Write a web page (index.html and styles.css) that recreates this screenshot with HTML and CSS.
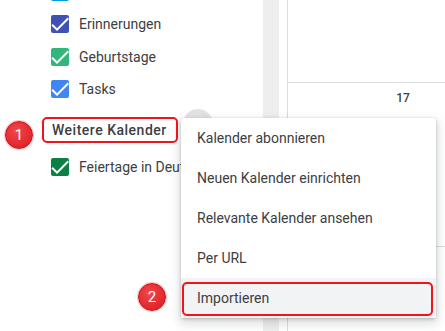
FILE: index.html
```html
<!DOCTYPE html>
<html lang="de">
  <head>
    <meta charset="UTF-8" />
    <meta name="viewport" content="width=device-width, initial-scale=1.0" />
    <title>Kalender</title>
    <link rel="stylesheet" href="styles.css">
  </head>
  <body>
    <div class="app">
      <aside class="sidebar">
        <div class="sidebar-scroll">
          <ul class="cal-list first">
            <li class="cal-row">
              <svg class="check" viewBox="3 3 18 18"><rect x="3" y="3" width="18" height="18" rx="2" fill="#039be5"/><path d="M9 16.17L4.83 12l-1.42 1.41L9 19 21 7l-1.41-1.41z" fill="#fff"/></svg>
              <span>Ryan Weber</span>
            </li>
            <li class="cal-row">
              <svg class="check" viewBox="3 3 18 18"><rect x="3" y="3" width="18" height="18" rx="2" fill="#3f51b5"/><path d="M9 16.17L4.83 12l-1.42 1.41L9 19 21 7l-1.41-1.41z" fill="#fff"/></svg>
              <span>Erinnerungen</span>
            </li>
            <li class="cal-row">
              <svg class="check" viewBox="3 3 18 18"><rect x="3" y="3" width="18" height="18" rx="2" fill="#33b679"/><path d="M9 16.17L4.83 12l-1.42 1.41L9 19 21 7l-1.41-1.41z" fill="#fff"/></svg>
              <span>Geburtstage</span>
            </li>
            <li class="cal-row">
              <svg class="check" viewBox="3 3 18 18"><rect x="3" y="3" width="18" height="18" rx="2" fill="#4285f4"/><path d="M9 16.17L4.83 12l-1.42 1.41L9 19 21 7l-1.41-1.41z" fill="#fff"/></svg>
              <span>Tasks</span>
            </li>
          </ul>
          <div class="section-head">
            <span class="badge badge-1">1</span>
            <span class="section-title">Weitere Kalender</span>
            <span class="add-btn"></span>
          </div>
          <ul class="cal-list">
            <li class="cal-row">
              <svg class="check" viewBox="3 3 18 18"><rect x="3" y="3" width="18" height="18" rx="2" fill="#0b8043"/><path d="M9 16.17L4.83 12l-1.42 1.41L9 19 21 7l-1.41-1.41z" fill="#fff"/></svg>
              <span>Feiertage in Deutschland</span>
            </li>
          </ul>
        </div>
        <div class="scrollbar"></div>
      </aside>
      <main class="grid">
        <div class="cell cell-top"></div>
        <div class="cell"><span class="day">17</span></div>
        <div class="cell"></div>
      </main>

      <ul class="menu">
        <li class="menu-item">Kalender abonnieren</li>
        <li class="menu-item">Neuen Kalender einrichten</li>
        <li class="menu-item">Relevante Kalender ansehen</li>
        <li class="menu-item">Per URL</li>
        <li class="menu-item active">
          <span class="badge badge-2">2</span>
          Importieren
        </li>
      </ul>
    </div>
  </body>
</html>
```

FILE: styles.css
```css
html,
body {
  margin: 0;
  height: 100%;
  overflow: hidden;
  background: #ffffff;
}
body {
  font-family: Roboto, "Noto Sans", Arial, sans-serif;
  font-size: 14px;
  color: #3c4043;
}
ul {
  list-style: none;
  margin: 0;
  padding: 0;
}
.app {
  position: relative;
  display: flex;
  height: 331px;
  overflow: hidden;
}
.sidebar {
  display: flex;
  width: 287px;
  flex-shrink: 0;
}
.sidebar-scroll {
  width: 263px;
  overflow: hidden;
}
.scrollbar {
  width: 16px;
  background: #eeeeee;
}
.cal-list.first {
  margin-top: -24px;
}
.cal-row {
  display: flex;
  align-items: center;
  gap: 10px;
  height: 32px;
  padding-left: 51px;
  white-space: nowrap;
}
.cal-list.first .cal-row + .cal-row {
  height: 32.5px;
}
.check {
  width: 18px;
  height: 18px;
  flex-shrink: 0;
}
.section-head {
  position: relative;
  display: flex;
  align-items: center;
  padding: 11px 0 8px 42px;
}
.section-title {
  box-sizing: border-box;
  height: 26px;
  line-height: 22px;
  padding: 0 9px 0 8px;
  border: 2px solid #f2141b;
  border-radius: 5px;
  font-weight: 500;
  letter-spacing: 0.5px;
  color: #3c4043;
}
.add-btn {
  position: absolute;
  left: 183px;
  top: 3px;
  width: 30px;
  height: 30px;
  border-radius: 50%;
  background: #e3e3e3;
}
.badge {
  position: absolute;
  width: 26px;
  height: 26px;
  border: 1px solid #c9141a;
  border-radius: 50%;
  background: radial-gradient(circle at 40% 35%, #f0484c, #e0262b 70%);
  box-shadow: 0 0 0 1px rgba(255, 80, 80, 0.35);
  color: #ffffff;
  font-size: 15px;
  line-height: 26px;
  text-align: center;
}
.badge-1 {
  left: 5px;
  top: 15px;
}
.badge-2 {
  left: -43px;
  top: 5px;
}
.grid {
  flex: 1;
  display: flex;
  flex-direction: column;
  border-left: 1px solid #dadce0;
}
.cell {
  flex-shrink: 0;
  height: 164px;
  border-bottom: 1px solid #dadce0;
  box-sizing: border-box;
  width: 230px;
  text-align: center;
}
.cell-top {
  height: 83px;
}
.day {
  display: inline-block;
  margin-top: 8px;
  font-size: 12px;
  font-weight: 500;
  color: #3c4043;
}
.menu {
  position: absolute;
  left: 181px;
  top: 118px;
  width: 255px;
  background: #ffffff;
  border-radius: 4px;
  box-shadow: 0 1px 3px rgba(60, 64, 67, 0.3), 0 4px 8px 3px rgba(60, 64, 67, 0.15);
}
.menu-item {
  position: relative;
  display: flex;
  align-items: center;
  height: 40px;
  padding-left: 16px;
  white-space: nowrap;
}
.menu-item.active {
  background: #f1f3f4;
}
.menu-item.active::after {
  content: "";
  position: absolute;
  left: 1px;
  right: 3px;
  top: 4px;
  bottom: 2px;
  border: 2px solid #f2141b;
  border-radius: 5px;
}
```
